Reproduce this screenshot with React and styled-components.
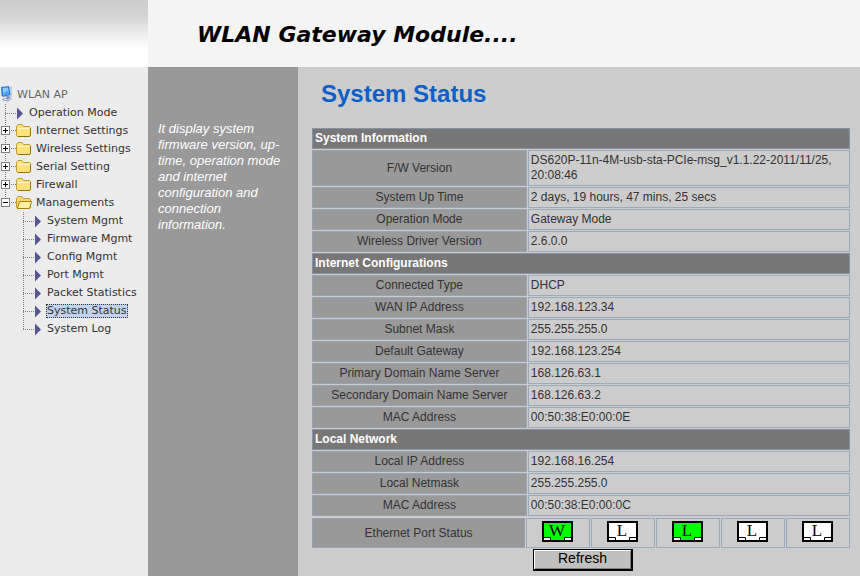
import React, { useState } from "react";
import styled, { createGlobalStyle } from "styled-components";

const GlobalStyle = createGlobalStyle`
  body {
    margin: 0;
    background: #cccccc;
    font-family: "Liberation Sans", Arial, sans-serif;
    font-size: 12px;
    color: #333;
  }
`;

const topItems = [
  { label: "Operation Mode", kind: "page" },
  { label: "Internet Settings", kind: "folder" },
  { label: "Wireless Settings", kind: "folder" },
  { label: "Serial Setting", kind: "folder" },
  { label: "Firewall", kind: "folder" },
  { label: "Managements", kind: "open" }
];

const managementItems = [
  "System Mgmt",
  "Firmware Mgmt",
  "Config Mgmt",
  "Port Mgmt",
  "Packet Statistics",
  "System Status",
  "System Log"
];

const sections = [
  {
    title: "System Information",
    rows: [
      ["F/W Version", "DS620P-11n-4M-usb-sta-PCIe-msg_v1.1.22-2011/11/25, 20:08:46"],
      ["System Up Time", "2 days, 19 hours, 47 mins, 25 secs"],
      ["Operation Mode", "Gateway Mode"],
      ["Wireless Driver Version", "2.6.0.0"]
    ]
  },
  {
    title: "Internet Configurations",
    rows: [
      ["Connected Type", "DHCP"],
      ["WAN IP Address", "192.168.123.34"],
      ["Subnet Mask", "255.255.255.0"],
      ["Default Gateway", "192.168.123.254"],
      ["Primary Domain Name Server", "168.126.63.1"],
      ["Secondary Domain Name Server", "168.126.63.2"],
      ["MAC Address", "00:50:38:E0:00:0E"]
    ]
  },
  {
    title: "Local Network",
    rows: [
      ["Local IP Address", "192.168.16.254"],
      ["Local Netmask", "255.255.255.0"],
      ["MAC Address", "00:50:38:E0:00:0C"]
    ]
  }
];

const ports = [
  { letter: "W", up: true },
  { letter: "L", up: false },
  { letter: "L", up: true },
  { letter: "L", up: false },
  { letter: "L", up: false }
];

export default function App() {
  const [selected, setSelected] = useState("System Status");

  return (
    <>
      <GlobalStyle />
      <Page>
        <Banner>
          <LogoArea />
          <Product>WLAN Gateway Module....</Product>
        </Banner>
        <Body>
          <Sidebar>
            <Root>
              <ComputerIcon />
              WLAN AP
            </Root>
            <Tree>
              {topItems.map((item, i) => (
                <li key={item.label}>
                  <TreeLink href="#" onClick={() => setSelected(item.label)}>
                    <Connector kind={item.kind} last={i === topItems.length - 1} />
                    {item.kind === "page" ? <Arrow /> : <Folder open={item.kind === "open"} />}
                    <Label $gap={item.kind === "page" ? 5 : 4} $selected={selected === item.label}>
                      {item.label}
                    </Label>
                  </TreeLink>
                </li>
              ))}
            </Tree>
            <Tree $nested>
              {managementItems.map((label, i) => (
                <li key={label}>
                  <TreeLink href="#" onClick={() => setSelected(label)}>
                    <Connector kind="page" last={i === managementItems.length - 1} />
                    <Arrow />
                    <Label $gap={5} $selected={selected === label}>
                      {label}
                    </Label>
                  </TreeLink>
                </li>
              ))}
            </Tree>
          </Sidebar>
          <Help>
            It display system firmware version, up-time, operation mode and
            internet configuration and connection information.
          </Help>
          <Main>
            <Title>System Status</Title>
            <StatusTable>
              <colgroup>
                <col width="40%" />
                <col />
              </colgroup>
              {sections.map(section => (
                <tbody key={section.title}>
                  <tr>
                    <SectionCell colSpan={2}>{section.title}</SectionCell>
                  </tr>
                  {section.rows.map(([name, value]) => (
                    <tr key={name}>
                      <NameCell scope="row">{name}</NameCell>
                      <ValueCell>{value}</ValueCell>
                    </tr>
                  ))}
                </tbody>
              ))}
            </StatusTable>
            <PortTable>
              <colgroup>
                <col width="40%" />
              </colgroup>
              <tbody>
                <tr>
                  <NameCell scope="row">Ethernet Port Status</NameCell>
                  {ports.map((port, i) => (
                    <PortCell key={i}>
                      <PortIcon {...port} />
                    </PortCell>
                  ))}
                </tr>
              </tbody>
            </PortTable>
            <Actions>
              <RefreshButton type="button">Refresh</RefreshButton>
            </Actions>
          </Main>
        </Body>
      </Page>
    </>
  );
}

function Connector({ kind, last }) {
  const page = kind === "page";
  return (
    <svg width={page ? 17 : 16} height="18" viewBox={`0 0 ${page ? 17 : 16} 18`} shapeRendering="crispEdges">
      <path d={`M5.5 0V${last ? 9 : 18}`} stroke="#808080" strokeDasharray="1 1" />
      <path d={page ? "M5 9.5H17" : "M5 8.5H16"} stroke="#808080" strokeDasharray="1 1" />
      {!page && (
        <>
          <rect x="1.5" y="4.5" width="8" height="8" fill="#fff" stroke="#808080" />
          <path d="M3 8.5H8" stroke="#000" />
          {kind === "folder" && <path d="M5.5 6V11" stroke="#000" />}
        </>
      )}
    </svg>
  );
}

function Arrow() {
  return (
    <svg width="7" height="18" viewBox="0 0 7 18">
      <path d="M0 3.5L6 9.5L0 15.5Z" fill="#555593" />
    </svg>
  );
}

function Folder({ open }) {
  return (
    <svg width="16" height="18" viewBox="0 0 16 18">
      <path
        d="M.5 13V4.5L2 2.5H6L7.5 4.5H13.5L14.5 5.5V13L13.5 14.5H1.5Z"
        fill={open ? "#f4d768" : "#ffe37a"}
        stroke="#c39a30"
      />
      {open ? (
        <path d="M3.5 7.5H15.5L13.5 14.5H1.5Z" fill="#fff0a0" stroke="#a87e18" />
      ) : (
        <>
          <path d="M1.5 6.5H13.5" stroke="#fff8c8" />
          <path d="M2 14.5H13.5L14.5 13V6" fill="none" stroke="#94700f" />
        </>
      )}
    </svg>
  );
}

function ComputerIcon() {
  return (
    <svg width="13" height="18" viewBox="0 0 13 18">
      <path d="M8 1L12 .5V11L9 13Z" fill="#c3cde0" />
      <path d="M1 1L9 0L10.5 9L3 11L1.500 9.500Z" fill="#2f7cd6" />
      <path d="M2.500 2L8 1.500L9 8L3.500 9.500Z" fill="#86cdfb" />
      <path d="M4 7L8.500 4L9 8L3.500 9.500Z" fill="#4b9fec" />
      <path d="M6 10.500L9 9.500L9.500 12L12 13L8 15.500L2 14L3 12.500L6.500 12.500Z" fill="#7f8fc2" />
      <path d="M4 13.500L8 14L11 13" stroke="#dfe6f5" fill="none" />
    </svg>
  );
}

function PortIcon({ letter, up }) {
  return (
    <svg width="31" height="21" viewBox="0 0 31 21" role="img">
      <path d="M1 1H30V20H1Z" fill={up ? "#00ff00" : "#fff"} stroke="#000" strokeWidth="2" />
      <path d="M2 16.5H8.5V19M29 16.5H22.5V19" fill="none" stroke="#000" />
      <path d="M2 17H8V19H2ZM23 17H29V19H23Z" fill="#fff" shapeRendering="crispEdges" />
      <PortLetter x="15" y="15" textAnchor="middle">
        {letter}
      </PortLetter>
    </svg>
  );
}

const Page = styled.div`
  min-height: 100vh;
  display: flex;
  flex-direction: column;
`;

const Banner = styled.header`
  display: flex;
  height: 67px;
  background: #f4f4f4;
`;

const LogoArea = styled.div`
  width: 148px;
  background: linear-gradient(#cccccc, #d4d4d4 16px, #ffffff 48px);
`;

const Product = styled.div`
  padding-left: 49px;
  line-height: 70px;
  font-family: "DejaVu Sans", Verdana, sans-serif;
  font-size: 22px;
  font-weight: bold;
  font-style: italic;
  color: #000;
`;

const Body = styled.div`
  flex: 1;
  display: flex;
`;

const Sidebar = styled.nav`
  flex: none;
  box-sizing: border-box;
  width: 148px;
  padding-top: 19px;
  background: #ececec;
  font-family: "DejaVu Sans", Verdana, sans-serif;
  font-size: 11px;
`;

const Root = styled.div`
  display: flex;
  gap: 4px;
  line-height: 18px;
  height: 18px;
  color: #666;
`;

const Tree = styled.ul`
  list-style: none;
  margin: 0;
  padding: 0 0 0 ${props => (props.$nested ? 18 : 0)}px;
`;

const TreeLink = styled.a`
  display: flex;
  align-items: center;
  height: 18px;
  color: #333;
  text-decoration: none;
  white-space: nowrap;
`;

const Label = styled.span`
  margin-left: ${props => props.$gap - 1}px;
  padding: 0 1px;
  line-height: 14px;
  background: ${props => (props.$selected ? "#c3d3ec" : "none")};
  outline: ${props => (props.$selected ? "1px dotted #333" : "none")};
  outline-offset: -1px;
`;

const Help = styled.aside`
  flex: none;
  box-sizing: border-box;
  width: 150px;
  padding: 54px 10px 0;
  background: #999999;
  color: #fff;
  font-size: 13px;
  line-height: 16px;
  font-style: italic;
`;

const Main = styled.main`
  flex: 1;
  padding: 0 9px 0 13px;
`;

const Title = styled.h1`
  margin: 0;
  padding: 13px 0 19px 10px;
  font-size: 24px;
  line-height: 28px;
  color: #0b60c9;
`;

const StatusTable = styled.table`
  width: 100%;
  table-layout: fixed;
  border-collapse: separate;
  border-spacing: 1px;
`;

const PortTable = styled(StatusTable)`
  height: 32px;
`;

const SectionCell = styled.th`
  padding: 2px;
  border: 1px solid #8793a3;
  background: #777777;
  color: #fff;
  line-height: 15px;
  text-align: left;
`;

const NameCell = styled.th`
  padding: 2px;
  border: 1px solid #97a3b3;
  background: #999999;
  font-weight: normal;
  line-height: 15px;
`;

const ValueCell = styled.td`
  padding: 2px;
  border: 1px solid #9aabc0;
  line-height: 15px;
`;

const PortCell = styled.td`
  padding: 0 2px 3px 0;
  border: 1px solid #9aabc0;

  svg {
    display: block;
    margin: 0 auto;
  }
`;

const PortLetter = styled.text`
  font-family: "Liberation Serif", "Times New Roman", serif;
  font-size: 17px;
  fill: #000;
`;

const Actions = styled.div`
  padding-left: 40%;
`;

const RefreshButton = styled.button`
  display: block;
  width: 100px;
  height: 22px;
  margin-left: 6px;
  padding: 0 0 2px;
  border: 1px solid #000;
  border-right-width: 2px;
  border-bottom-width: 2px;
  background: #c0c0c0;
  box-shadow: inset 1px 1px 0 #fff, inset -1px -1px 0 #808080;
  font-family: inherit;
  font-size: 14px;
  line-height: 17px;
  color: #000;
`;
